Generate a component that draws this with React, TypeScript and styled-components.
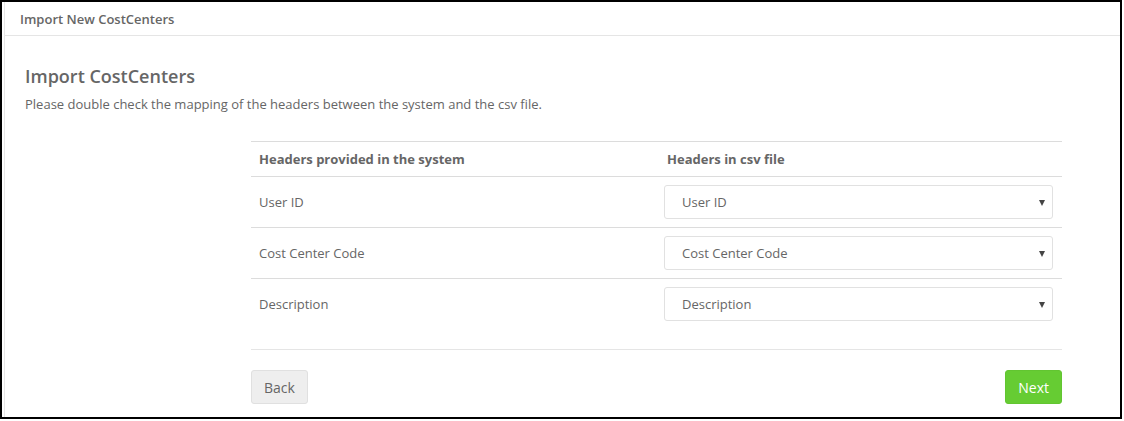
import React from "react";
import styled, { createGlobalStyle } from "styled-components";

const Global = createGlobalStyle`
  html, body { margin: 0; padding: 0; background: #fff; }
  body { font-family: "Open Sans", "Liberation Sans", sans-serif; color: #666; }
  * { box-sizing: border-box; }
`;

const Frame = styled.div`
  width: 1122px;
  height: 419px;
  border: 2px solid #000;
  background: #fff;
  padding: 0 0 0 2px;
  overflow: hidden;
`;

const Panel = styled.div`
  height: 100%;
  border-left: 1px solid #e6e6e6;
  display: flex;
  flex-direction: column;
`;

const PanelHeader = styled.div`
  height: 34px;
  border-bottom: 1px solid #e5e5e5;
  display: flex;
  align-items: center;
  padding-left: 15px;
  font-size: 13px;
  font-weight: 600;
  color: #666;
`;

const Body = styled.div`
  padding: 26px 21px 0 20px;
`;

const Title = styled.h2`
  margin: 0;
  font-size: 18px;
  font-weight: 600;
  color: #666;
  line-height: 28px;
`;

const Intro = styled.p`
  margin: 4px 0 0 0;
  font-size: 13px;
  line-height: 20px;
  color: #666;
`;

const Mapping = styled.div`
  margin: 27px 0 0 226px;
  width: 811px;
`;

const Table = styled.div`
  border-top: 1px solid #dcdcdc;
`;

const Row = styled.div<{ $head?: boolean; $last?: boolean }>`
  display: grid;
  grid-template-columns: 408px 1fr;
  align-items: center;
  height: ${(p) => (p.$head ? "35px" : p.$last ? "50px" : "51px")};
  border-bottom: ${(p) => (p.$last ? "none" : "1px solid #dcdcdc")};
`;

const HeadCell = styled.div`
  padding-left: 8px;
  font-size: 13px;
  font-weight: 700;
  color: #666;
`;

const Cell = styled.div`
  padding-left: 8px;
  font-size: 13px;
  color: #666;
`;

const SelectCell = styled.div`
  padding: 0 9px 0 5px;
`;

const SelectBox = styled.div`
  position: relative;
  height: 34px;
  border: 1px solid #e1e1e1;
  border-radius: 3px;
  display: flex;
  align-items: center;
  padding-left: 17px;
  font-size: 13px;
  color: #666;
  background: #fff;
`;

const Caret = styled.span`
  position: absolute;
  right: 7px;
  top: 50%;
  margin-top: -2px;
  width: 0;
  height: 0;
  border-left: 3.5px solid transparent;
  border-right: 3.5px solid transparent;
  border-top: 6px solid #444;
`;

const Footer = styled.div`
  margin-top: 20px;
  border-top: 1px solid #e5e5e5;
  padding-top: 20px;
  display: flex;
  justify-content: space-between;
`;

const Button = styled.button<{ $primary?: boolean }>`
  height: 34px;
  padding: 0 12px;
  border: 1px solid ${(p) => (p.$primary ? "#62c531" : "#e0e0e0")};
  border-radius: 3px;
  background: ${(p) => (p.$primary ? "#66cc33" : "#eeeeee")};
  color: ${(p) => (p.$primary ? "#fff" : "#666")};
  font-family: "Open Sans", "Liberation Sans", sans-serif;
  font-size: 14px;
  cursor: pointer;
`;

const rows = [
  { sys: "User ID", csv: "User ID" },
  { sys: "Cost Center Code", csv: "Cost Center Code" },
  { sys: "Description", csv: "Description" },
];

export default function App() {
  return (
    <>
      <Global />
      <Frame>
        <Panel>
          <PanelHeader>Import New CostCenters</PanelHeader>
          <Body>
            <Title>Import CostCenters</Title>
            <Intro>Please double check the mapping of the headers between the system and the csv file.</Intro>
            <Mapping>
              <Table>
                <Row $head>
                  <HeadCell>Headers provided in the system</HeadCell>
                  <HeadCell>Headers in csv file</HeadCell>
                </Row>
                {rows.map((r, i) => (
                  <Row key={r.sys} $last={i === rows.length - 1}>
                    <Cell>{r.sys}</Cell>
                    <SelectCell>
                      <SelectBox>
                        {r.csv}
                        <Caret />
                      </SelectBox>
                    </SelectCell>
                  </Row>
                ))}
              </Table>
              <Footer>
                <Button>Back</Button>
                <Button $primary>Next</Button>
              </Footer>
            </Mapping>
          </Body>
        </Panel>
      </Frame>
    </>
  );
}
